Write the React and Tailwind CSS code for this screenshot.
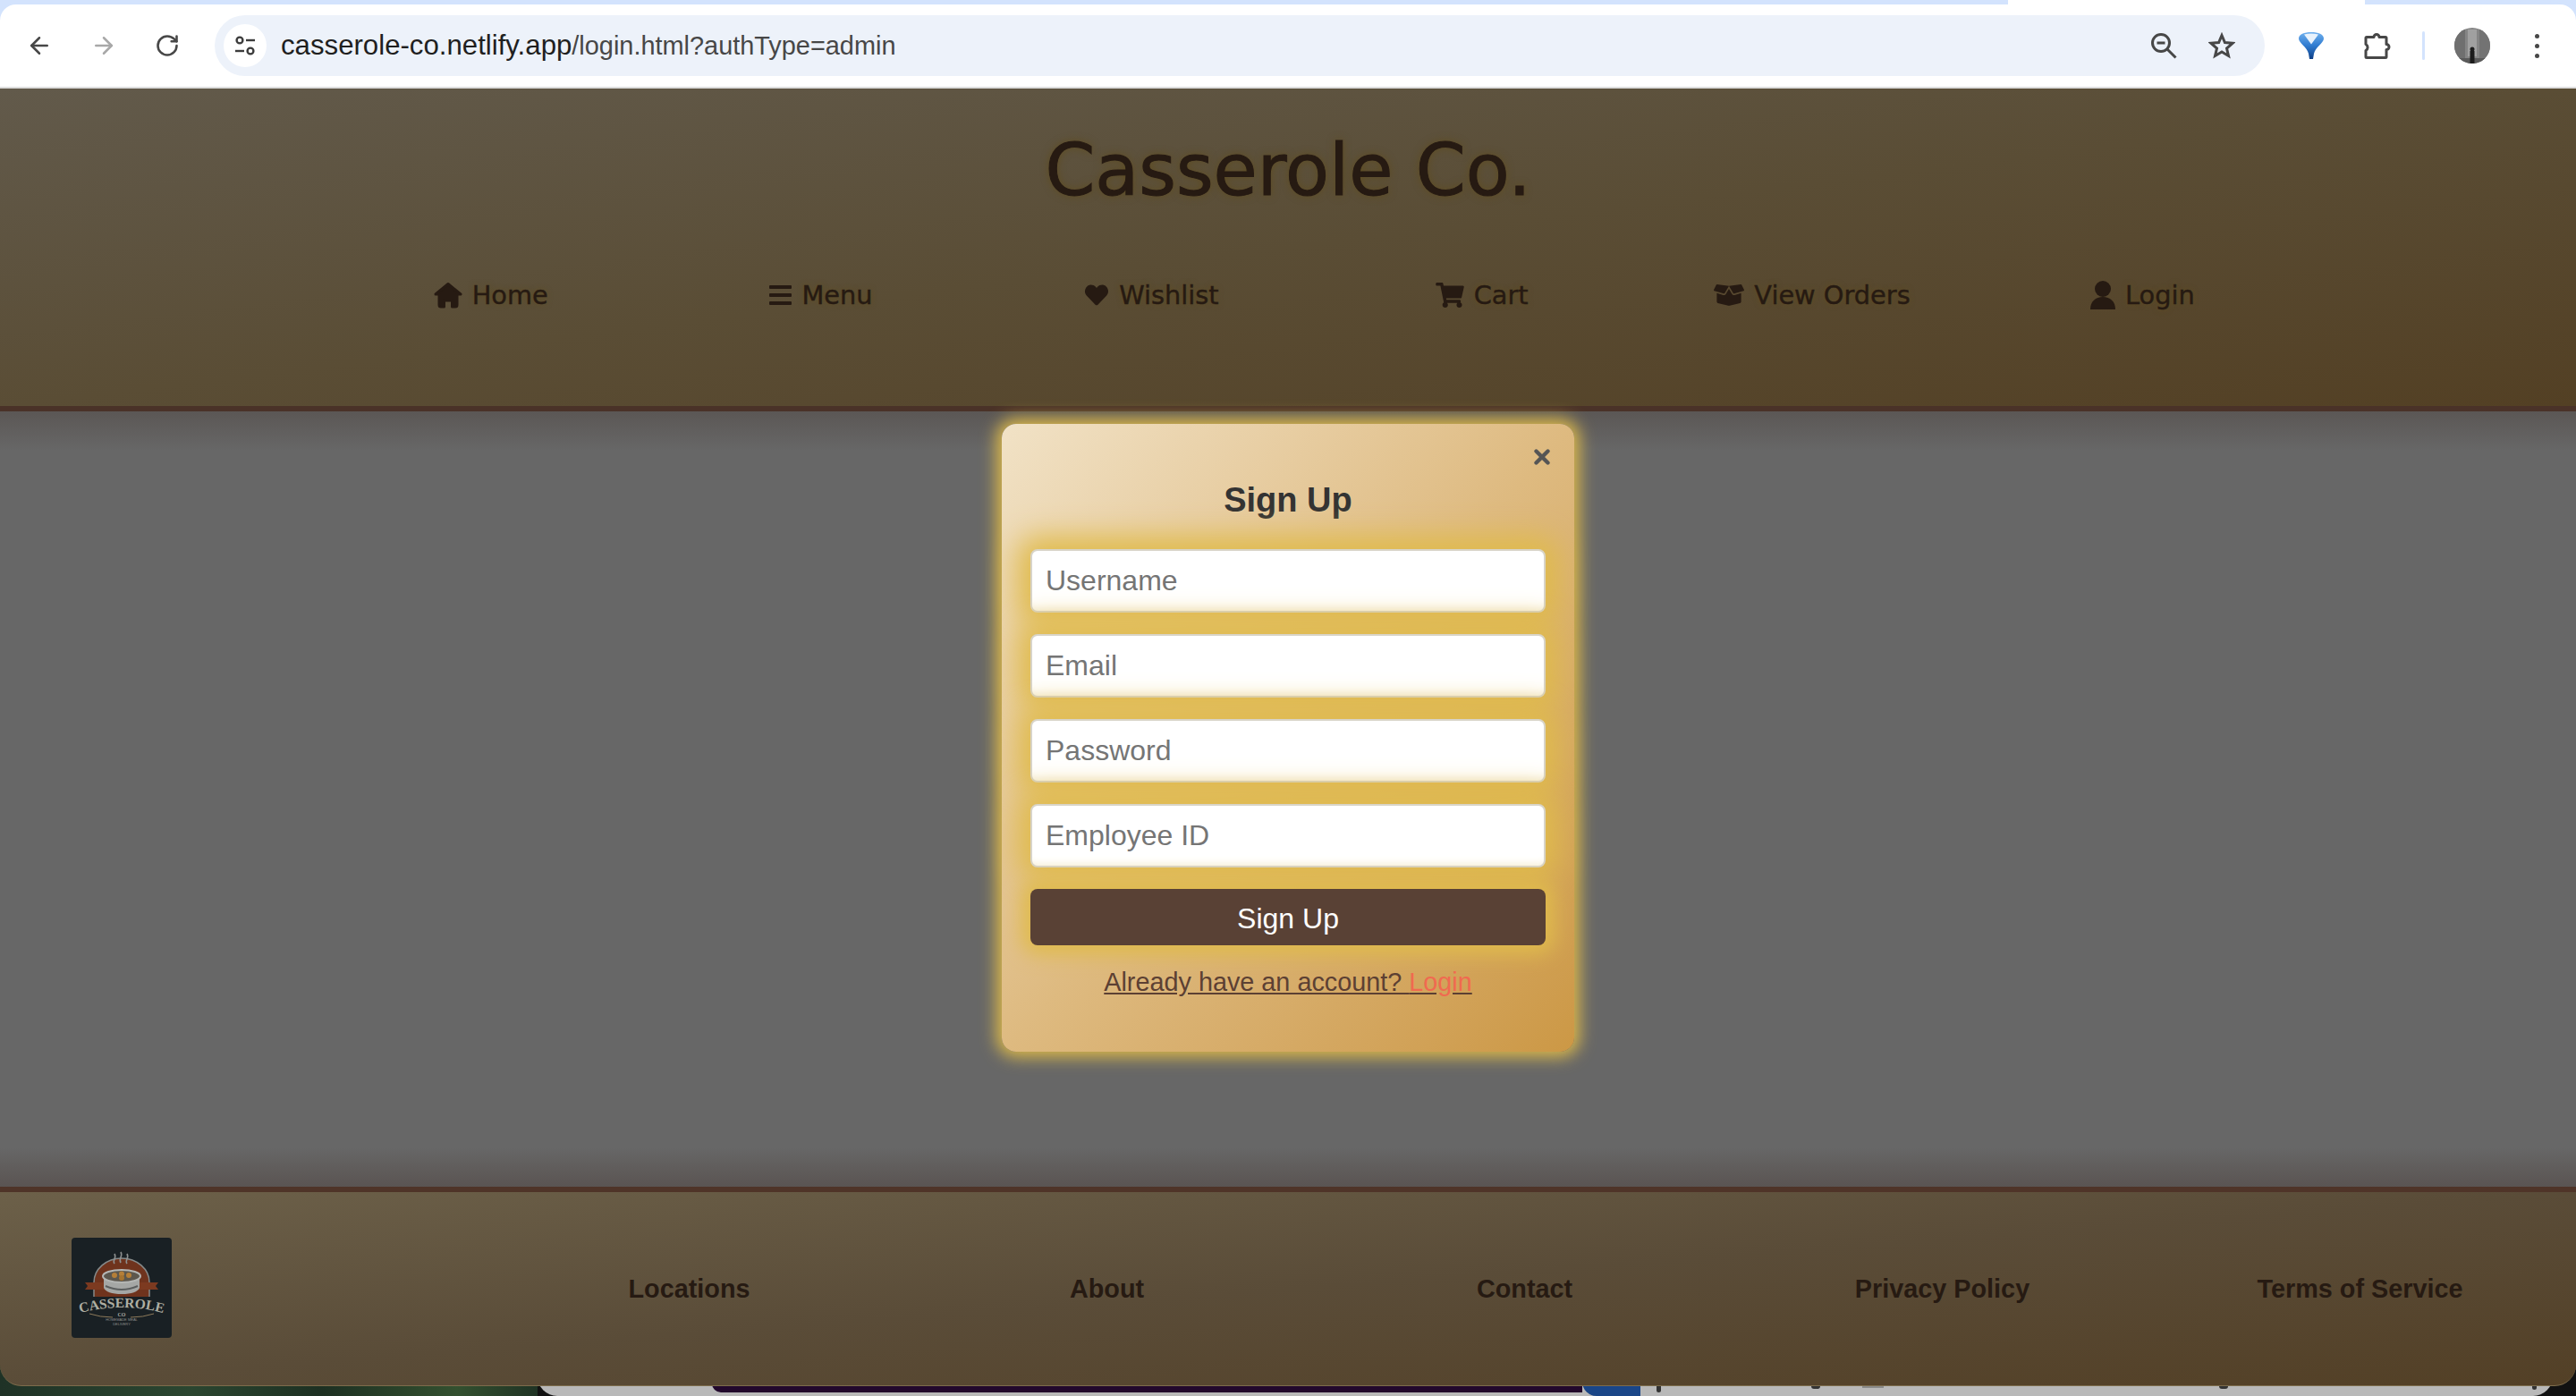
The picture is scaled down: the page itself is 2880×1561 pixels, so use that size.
import { ArrowLeft, ArrowRight, RotateCw, X } from 'lucide-react';
import { FaHeart, FaShoppingCart, FaBoxOpen } from 'react-icons/fa';

function HomeIcon() {
  return (
    <svg width="32" height="30" viewBox="0 0 32 30" fill="currentColor" stroke="currentColor" strokeWidth="3" strokeLinejoin="round">
      <path d="M16 2.500L30 14h-4v12a2 2 0 0 1-2 2h-3.500v-7h-9v7H8a2 2 0 0 1-2-2V14H2z" />
    </svg>
  );
}

function MenuIcon() {
  return (
    <svg width="25" height="22" viewBox="0 0 25 22" fill="currentColor">
      <rect width="25" height="4" y="0" rx="1" />
      <rect width="25" height="4" y="9" rx="1" />
      <rect width="25" height="4" y="18" rx="1" />
    </svg>
  );
}

function UserIcon() {
  return (
    <svg width="28" height="32" viewBox="0 0 28 32" fill="currentColor">
      <circle cx="14" cy="9" r="9" />
      <path d="M0 32c0-9 6-14 14-14s14 5 14 14z" />
    </svg>
  );
}

const navItems = [
  { label: 'Home', icon: <HomeIcon /> },
  { label: 'Menu', icon: <MenuIcon /> },
  { label: 'Wishlist', icon: <FaHeart className="h-[26px] w-[28px]" /> },
  { label: 'Cart', icon: <FaShoppingCart className="h-[28px] w-[32px]" /> },
  { label: 'View Orders', icon: <FaBoxOpen className="h-[28px] w-[34px]" /> },
  { label: 'Login', icon: <UserIcon /> },
];

const footerLinks = ['Locations', 'About', 'Contact', 'Privacy Policy', 'Terms of Service'];
const fields = ['Username', 'Email', 'Password', 'Employee ID'];

function SiteInfoIcon() {
  return (
    <svg width="28" height="28" viewBox="0 0 28 28" fill="none" stroke="#3c3c3c" strokeWidth="2.4">
      <circle cx="8" cy="8" r="3.4" />
      <path d="M15 8h10" />
      <path d="M3 20h10" />
      <circle cx="20" cy="20" r="3.4" />
    </svg>
  );
}

function ZoomOutIcon() {
  return (
    <svg width="30" height="30" viewBox="0 0 30 30" fill="none" stroke="#474747" strokeWidth="3">
      <circle cx="12" cy="12" r="9.5" />
      <path d="M7.5 12h9" />
      <path d="M19 19l9.5 9.5" />
    </svg>
  );
}

function StarIcon() {
  return (
    <svg width="30" height="30" viewBox="0 0 30 30" fill="none" stroke="#474747" strokeWidth="3" strokeLinejoin="miter">
      <path d="M15 3.5l3.4 8 8.6.8-6.5 5.7 2 8.5-7.5-4.5-7.5 4.5 2-8.5L3 12.3l8.6-.8z" />
    </svg>
  );
}

function PuzzleIcon() {
  return (
    <svg width="32" height="32" viewBox="0 0 32 32" fill="none" stroke="#474747" strokeWidth="3" strokeLinejoin="round">
      <path d="M4 6.500h8a3 3 0 0 1 6 0h7a1 1 0 0 1 1 1v7a3 3 0 0 1 0 6v8a1 1 0 0 1-1 1H4a1 1 0 0 1-1-1v-7a4 4 0 0 0 0-7V7.500a1 1 0 0 1 1-1z" />
    </svg>
  );
}

function FunnelIcon() {
  return (
    <svg width="28" height="30" viewBox="0 0 28 30">
      <defs>
        <linearGradient id="gem" x1="0" y1="0" x2="0" y2="1">
          <stop offset="0" stopColor="#6fb0ee" />
          <stop offset="0.5" stopColor="#2f7bd0" />
          <stop offset="1" stopColor="#0e3f86" />
        </linearGradient>
      </defs>
      <path d="M14 0c8 0 14 2.500 14 7 0 5-9.500 10-11 17l-1 6h-4l-1-6C9.500 17 0 12 0 7c0-4.500 6-7 14-7z" fill="url(#gem)" />
      <path d="M6 2.500c5-1.500 11-1.500 16 0l-8 11z" fill="#e8f2fc" />
    </svg>
  );
}

function Avatar() {
  return (
    <svg width="40" height="40" viewBox="0 0 40 40" className="rounded-full">
      <rect width="40" height="40" fill="#858585" />
      <rect x="0" y="0" width="12" height="40" fill="#6f6f6f" />
      <rect x="28" y="0" width="12" height="40" fill="#737373" />
      <rect x="15" y="2" width="10" height="30" fill="#a0a0a0" />
      <rect x="0" y="34" width="40" height="6" fill="#5a5a5a" />
      <circle cx="20" cy="24" r="2.500" fill="#1c1c1c" />
      <rect x="17.500" y="26" width="5" height="14" fill="#1c1c1c" />
    </svg>
  );
}

function Logo() {
  return (
    <svg width="112" height="112" viewBox="0 0 112 112" className="rounded-sm">
      <rect width="112" height="112" fill="#192024" />
      <path d="M25 66V50a31 27 0 0 1 62 0v16" fill="#6f331d" stroke="#858a8a" strokeWidth="1.500" />
      <path d="M48 29c-3-4 3-6 0-11M55 28c-3-5 3-7 0-12M62 29c-3-4 3-6 0-11" fill="none" stroke="#8d9090" strokeWidth="1.600" />
      <path d="M15 50h82l-3 4 3 4H15l3-4z" fill="#7c3a20" />
      <path d="M36 44h40v12q-3 7-20 7t-20-7z" fill="#a5a7a5" />
      <path d="M38 54q18 8 36 0" fill="none" stroke="#5b5e5e" strokeWidth="2" />
      <ellipse cx="56" cy="43" rx="21" ry="7" fill="#5c574e" stroke="#b4b6b4" strokeWidth="2" />
      <circle cx="48" cy="42" r="3" fill="#b57f38" />
      <circle cx="56" cy="40.500" r="3" fill="#b57f38" />
      <circle cx="64" cy="42" r="3" fill="#b57f38" />
      <circle cx="56" cy="45" r="3" fill="#a5732f" />
      <path id="logo-arc" d="M14 83Q56 73 98 83" fill="none" />
      <text fontFamily="'Liberation Serif', serif" fontWeight="700" fontSize="15.500" fill="#aeaea2">
        <textPath href="#logo-arc" startOffset="50%" textAnchor="middle">CASSEROLE</textPath>
      </text>
      <path d="M20 85q12 4 26 4M66 89q14 0 26-4" fill="none" stroke="#8d7a5a" strokeWidth="1" />
      <text x="56" y="88" textAnchor="middle" fontFamily="'Liberation Serif', serif" fontWeight="700" fontSize="6" fill="#a9aaa4">CO</text>
      <text x="56" y="93" textAnchor="middle" fontFamily="'Liberation Sans', sans-serif" fontSize="4" fill="#8d8f8c">HOMEMADE MEAL</text>
      <text x="56" y="98" textAnchor="middle" fontFamily="'Liberation Sans', sans-serif" fontSize="4" fill="#8d8f8c">DELIVERY</text>
    </svg>
  );
}

function BrowserBar() {
  return (
    <div className="bg-[#d3e3fd]">
      <div className="flex h-[5px]">
        <div className="w-[2245px]" />
        <div className="w-[399px] bg-white" />
        <div className="flex-1" />
      </div>
      <div className="flex h-[92px] items-center rounded-t-[18px] bg-white pl-[29px]">
        <ArrowLeft className="h-[30px] w-[30px] text-[#474747]" strokeWidth={2} />
        <ArrowRight className="ml-[42px] h-[30px] w-[30px] text-[#a8a8a8]" strokeWidth={2} />
        <RotateCw className="ml-[42px] h-[28px] w-[28px] text-[#474747]" strokeWidth={2.2} />
        <div className="ml-[39px] flex h-[68px] w-[2292px] items-center rounded-full bg-[#edf2fa] pl-[10px] pr-[33px]">
          <div className="flex h-[48px] w-[48px] items-center justify-center rounded-full bg-white">
            <SiteInfoIcon />
          </div>
          <div className="ml-[16px] font-['Liberation_Sans',sans-serif] text-[28.9px] text-[#474747]">
            <span className="text-[31.2px] text-[#1f1f1f]">casserole-co.netlify.app</span>/login.html?authType=admin
          </div>
          <div className="ml-auto"><ZoomOutIcon /></div>
          <div className="ml-[35px]"><StarIcon /></div>
        </div>
        <div className="ml-[38px]"><FunnelIcon /></div>
        <div className="ml-[44px]"><PuzzleIcon /></div>
        <div className="ml-[34px] h-[32px] w-[3px] rounded-full bg-[#d3e3fd]" />
        <div className="ml-[33px]"><Avatar /></div>
        <div className="ml-[50px] flex flex-col gap-[6px]">
          <span className="h-[5px] w-[5px] rounded-full bg-[#474747]" />
          <span className="h-[5px] w-[5px] rounded-full bg-[#474747]" />
          <span className="h-[5px] w-[5px] rounded-full bg-[#474747]" />
        </div>
      </div>
      <div className="h-[2px] bg-[#dddddd]" />
    </div>
  );
}

function Header() {
  return (
    <header className="h-[361px] border-b-[6px] border-[#4a3228] bg-gradient-to-br from-[#625a4b] via-[#5a4d35] to-[#534024] font-['DejaVu_Sans',sans-serif] text-[#261a12]">
      <h1 className="pt-[45px] text-center text-[80px] leading-[94px] [-webkit-text-stroke:1px_#261a12] [text-shadow:0_0_10px_#5f4c1d]">Casserole Co.</h1>
      <nav className="ml-[364px] mt-[72px] grid w-[2216px] grid-cols-6">
        {navItems.map(({ label, icon }) => (
          <a key={label} className="flex items-center justify-center gap-[11px] text-[28.8px] leading-[40px] [-webkit-text-stroke:0.4px_#261a12] [text-shadow:0_0_6px_#5f4c1d]">
            {icon}
            {label}
          </a>
        ))}
      </nav>
    </header>
  );
}

function SignUpModal() {
  return (
    <div className="relative w-[640px] rounded-[16px] bg-gradient-to-br from-[#f1e2c6] via-[#deba80] to-[#cc9845] px-[32px] pb-[60px] pt-[62px] font-['Liberation_Sans',sans-serif] shadow-[0_0_18px_6px_#dcb94a]">
      <X className="absolute right-[23px] top-[24px] h-[26px] w-[26px] text-[#555555]" strokeWidth={4} />
      <h2 className="text-center text-[38px] font-bold leading-[46px] text-[#333333]">Sign Up</h2>
      <form className="mt-[32px] flex flex-col gap-[24px]">
        {fields.map((field) => (
          <input
            key={field}
            placeholder={field}
            className="h-[71px] w-full rounded-[8px] border-2 border-[#d8d4c8] bg-white px-[15px] text-[32px] shadow-[0_0_32px_14px_#e0bb4c,inset_0_-10px_10px_-8px_#f8f2e2] outline-none placeholder:text-[#757575]"
          />
        ))}
        <button type="button" className="relative h-[63px] rounded-[8px] bg-[#594135] pt-[2px] text-[32px] text-white shadow-[0_0_22px_10px_#e0bb4c]">
          Sign Up
        </button>
      </form>
      <p className="relative mt-[23px] text-center text-[28.8px] leading-[36px] text-[#5c4033] underline">
        Already have an account? <span className="text-[#f06a50]">Login</span>
      </p>
    </div>
  );
}

function Footer() {
  return (
    <footer className="h-[223px] rounded-b-[24px] border-b border-t-[6px] border-b-[#7d6c4c] border-t-[#4f3428] bg-gradient-to-br from-[#6c6049] via-[#5a4c38] to-[#534026] font-['Liberation_Sans',sans-serif]">
      <div className="flex h-[216px] items-start justify-between pl-[80px] pr-[8px] pt-[51px]">
        <Logo />
        <div className="grid w-[2335px] grid-cols-5 pt-[40px] text-center text-[28.8px] font-bold leading-[34px] text-[#261a12]">
          {footerLinks.map((link) => (
            <a key={link}>{link}</a>
          ))}
        </div>
      </div>
    </footer>
  );
}

function DesktopStrip() {
  return (
    <div className="-mt-[24px] flex h-[35px] bg-[#111111]">
      <div className="w-[601px] bg-[linear-gradient(to_right,#1f3226,#2b4630_35%,#1d3022_60%,#33502f_85%,#1f3324)]" />
      <div className="flex w-[2253px] items-start rounded-bl-[22px] rounded-br-[22px] bg-[#b9b9b9]">
        <div className="ml-[195px] h-[31px] w-[973px] rounded-bl-[10px] bg-[#22082c]" />
        <div className="h-[35px] w-[65px] rounded-bl-[16px] bg-[#1a4688]" />
        <div className="ml-[18px] mt-[24px] h-[7px] w-[5px] rounded-b-full bg-[#333333]" />
        <div className="ml-[168px] mt-[24px] h-[3px] w-[10px] rounded-b-full bg-[#333333]" />
        <div className="ml-[47px] mt-[24px] h-[2px] w-[24px] bg-[#8a8a8a]" />
        <div className="ml-[375px] mt-[24px] h-[3px] w-[10px] rounded-b-full bg-[#333333]" />
        <div className="ml-[340px] mt-[24px] h-[4px] w-[5px] rounded-b-full bg-[#333333]" />
      </div>
    </div>
  );
}

export default function App() {
  return (
    <div className="h-[1561px] w-[2880px] overflow-hidden">
      <div className="relative z-10 flex h-[1550px] flex-col">
        <BrowserBar />
        <Header />
        <main className="flex-1 bg-[linear-gradient(to_bottom,#5b5755,#676767_44px,#676767_calc(100%-44px),#5a5452)]">
          <div className="flex justify-center pt-[14px]">
            <SignUpModal />
          </div>
        </main>
        <Footer />
      </div>
      <DesktopStrip />
    </div>
  );
}
